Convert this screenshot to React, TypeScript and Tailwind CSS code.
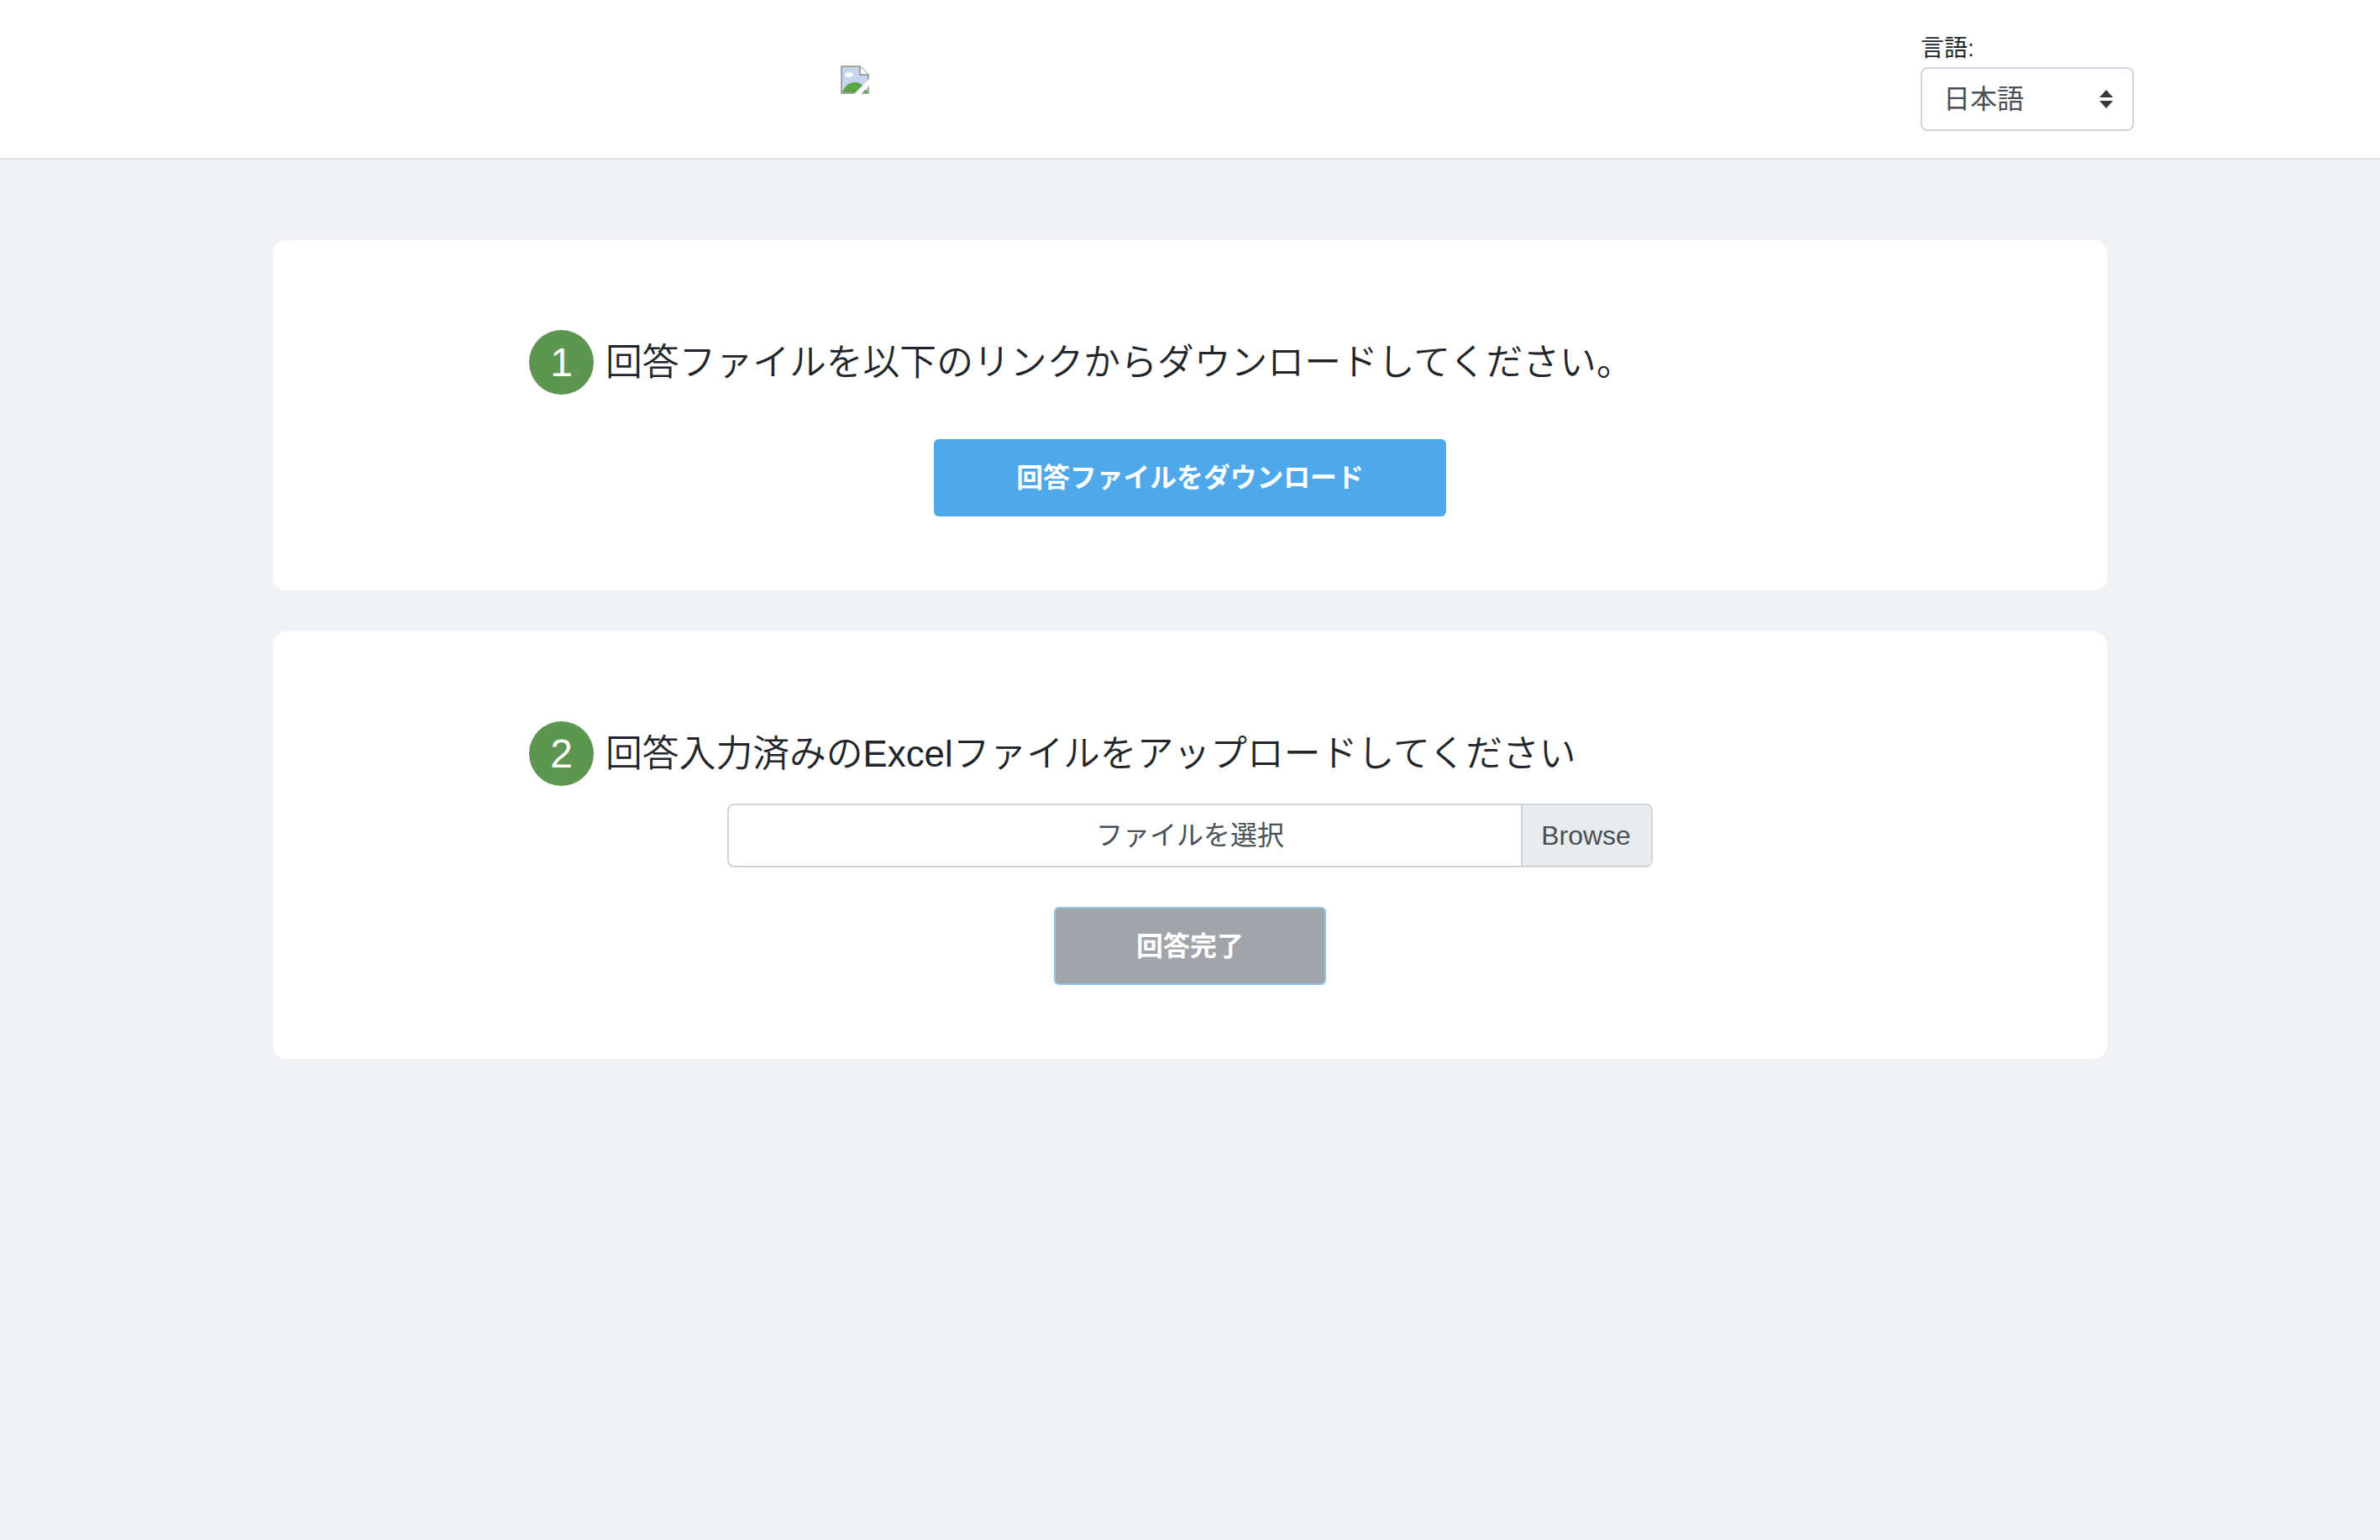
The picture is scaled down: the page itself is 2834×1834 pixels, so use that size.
import React from 'react';

const FONT = "font-['Liberation_Sans','Noto_Sans_CJK_JP',sans-serif]";

// Browser's broken image placeholder
function BrokenImage() {
  return (
    <svg width="34" height="34" viewBox="0 0 34 34" className="block">
      <path d="M1 1H23L33 11V33H1Z" fill="#c6d5ec" stroke="#8f8f8f" strokeWidth="1.5" />
      <path d="M23 1V11H33" fill="#fff" stroke="#8f8f8f" strokeWidth="1.5" />
      <ellipse cx="10" cy="11" rx="5" ry="3" fill="#fff" />
      <path d="M2 32C6 22 12 20 18 20C24 20 29 26 32 32Z" fill="#5aa544" />
      <path d="M18 36L38 16" stroke="#fff" strokeWidth="6" />
    </svg>
  );
}

function StepHeading({ step, children }: { step: number; children: React.ReactNode }) {
  return (
    <div className="flex items-center gap-[14px] pl-[305px]">
      <div className="flex h-[77px] w-[77px] shrink-0 items-center justify-center rounded-full bg-[#5d9650] text-[48px] text-white">
        {step}
      </div>
      <h2 className="text-[43.8px] font-[350] text-[#212529]">{children}</h2>
    </div>
  );
}

export default function App() {
  return (
    <div className={`min-h-screen bg-[#f1f2f6] ${FONT}`}>
      <header className="flex h-[190px] items-start justify-between border-b-2 border-[#e2e3e6] bg-white pl-[1001px] pr-[293px]">
        <div className="pt-[78px]">
          <BrokenImage />
        </div>
        <div className="pt-[38px]">
          <label className="block h-[42px] text-[28px] leading-[40px] text-[#212529]">言語:</label>
          <div className="flex h-[76px] w-[254px] items-center justify-between rounded-[8px] border-2 border-[#ced4da] pl-[25px] pr-[23px] text-[32px] text-[#495057]">
            <span>日本語</span>
            <svg width="16" height="22" viewBox="0 0 16 22">
              <path d="M8 0L16 9H0Z M8 22L0 13H16Z" fill="#343a40" />
            </svg>
          </div>
        </div>
      </header>

      <main className="mx-auto flex w-[2184px] flex-col gap-[49px] pt-[96px]">
        <section className="rounded-[16px] bg-white pb-[88px] pt-[107px]">
          <StepHeading step={1}>回答ファイルを以下のリンクからダウンロードしてください。</StepHeading>
          <div className="mt-[53px] flex justify-center">
            <button className="h-[92px] w-[610px] rounded-[6px] bg-[#4ea8ea] pt-[1px] text-[31.8px] font-bold text-white">
              回答ファイルをダウンロード
            </button>
          </div>
        </section>

        <section className="rounded-[16px] bg-white pb-[88px] pt-[107px]">
          <StepHeading step={2}>回答入力済みのExcelファイルをアップロードしてください</StepHeading>
          <div className="mt-[21px] flex justify-center">
            <div className="relative flex h-[76px] w-[1102px] items-center justify-center overflow-hidden rounded-[8px] border-2 border-[#ced4da] text-[32px] text-[#495057]">
              <span>ファイルを選択</span>
              <div className="absolute inset-y-0 right-0 flex w-[155px] items-center justify-center border-l-2 border-[#ced4da] bg-[#e9ecef] pr-[2px]">
                Browse
              </div>
            </div>
          </div>
          <div className="mt-[47px] flex justify-center">
            <button className="h-[93px] w-[324px] rounded-[6px] border-2 border-[#8fc4e6] bg-[#a1a4a8] text-[32px] font-bold text-white">
              回答完了
            </button>
          </div>
        </section>
      </main>
    </div>
  );
}
